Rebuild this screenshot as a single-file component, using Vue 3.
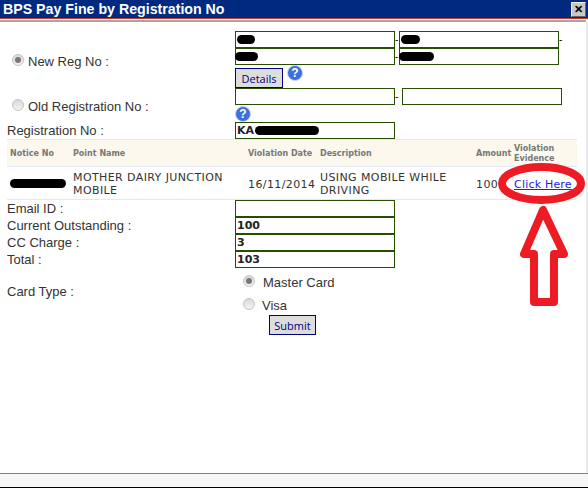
<template>
  <div class="dialog">
    <div class="titlebar">
      <span class="title">BPS Pay Fine by Registration No</span>
      <span class="close">✕</span>
    </div>
    <div class="rule"></div>

    <div class="body">
      <div class="row row-new">
        <label class="label radio-label">
          <input type="radio" name="regtype" class="radio" checked />
          New Reg No :
        </label>
        <div>
          <div class="pair">
            <div class="field"><span class="blot" style="width: 18px"></span></div>
            <span class="dash">-</span>
            <div class="field"><span class="blot" style="width: 19px"></span></div>
            <span class="dash">-</span>
          </div>
          <div class="pair">
            <div class="field"><span class="blot blot-out" style="width: 23px"></span></div>
            <span class="dash">-</span>
            <div class="field"><span class="blot blot-out" style="width: 35px"></span></div>
          </div>
          <div class="details-line">
            <button class="btn btn-details">Details</button>
            <span class="help help-up">?</span>
          </div>
        </div>
      </div>

      <div class="row row-old">
        <label class="label radio-label">
          <input type="radio" name="regtype" class="radio" />
          Old Registration No :
        </label>
        <div>
          <div class="pair">
            <div class="field"></div>
            <span class="dash dash-wide">-</span>
            <div class="field"></div>
          </div>
          <div class="help-line"><span class="help">?</span></div>
        </div>
      </div>

      <div class="row">
        <div class="label">Registration No :</div>
        <div class="field value">KA<span class="blot" style="width: 64px; margin-left: 1px"></span></div>
      </div>

      <table class="violations">
        <thead>
          <tr>
            <th class="c1">Notice No</th>
            <th class="c2">Point Name</th>
            <th class="c3">Violation Date</th>
            <th class="c4">Description</th>
            <th class="c5">Amount</th>
            <th class="c6">Violation Evidence</th>
          </tr>
        </thead>
        <tbody>
          <tr>
            <td><span class="blot" style="width: 56px"></span></td>
            <td>MOTHER DAIRY JUNCTION MOBILE</td>
            <td>16/11/2014</td>
            <td>USING MOBILE WHILE DRIVING</td>
            <td>100</td>
            <td><a href="#" class="link" @click.prevent>Click Here</a></td>
          </tr>
        </tbody>
      </table>

      <div class="row" v-for="item in summary" :key="item.label">
        <div class="label">{{ item.label }}</div>
        <div class="field value">{{ item.value }}</div>
      </div>

      <div class="row row-card">
        <div class="label">Card Type :</div>
        <div class="card-options">
          <label class="card-option">
            <input type="radio" name="card" class="radio" checked />
            Master Card
          </label>
          <label class="card-option card-visa">
            <input type="radio" name="card" class="radio" />
            Visa
          </label>
          <button class="btn btn-submit">Submit</button>
        </div>
      </div>
    </div>

    <div class="footer"></div>

    <!-- red annotation drawn over the page -->
    <svg class="markup" width="588" height="488" viewBox="0 0 588 488">
      <ellipse cx="541.5" cy="183.5" rx="39.5" ry="16.5" fill="none" stroke="#ed1c24" stroke-width="8" />
      <path
        d="M543 210 L524 254 H534 V302 H554 V254 H564 Z"
        fill="none"
        stroke="#ed1c24"
        stroke-width="8"
        stroke-linejoin="round"
      />
    </svg>
  </div>
</template>

<script setup>
const summary = [
  { label: 'Email ID :', value: '' },
  { label: 'Current Outstanding :', value: '100' },
  { label: 'CC Charge :', value: '3' },
  { label: 'Total :', value: '103' }
]
</script>

<style>
html,
body {
  margin: 0;
  background: #fff;
  overflow: hidden;
}
</style>

<style scoped>
.dialog {
  position: relative;
  display: flex;
  flex-direction: column;
  width: 588px;
  height: 488px;
  background: #fff;
  font-family: "Liberation Sans", Arial, sans-serif;
  font-size: 13px;
  color: #333;
  overflow: hidden;
}

.titlebar {
  display: flex;
  align-items: center;
  justify-content: space-between;
  height: 18px;
  padding: 0 2px 0 3px;
  background: #002a7f;
  border-bottom: 1px solid #c0392b;
  flex: none;
}

.title {
  color: #fff;
  font-size: 14.2px;
  font-weight: bold;
  line-height: 18px;
}

.close {
  display: flex;
  align-items: center;
  justify-content: center;
  width: 13px;
  height: 13px;
  background: #c8c8c8;
  border: 1px solid;
  border-color: #eee #666 #666 #eee;
  color: #000;
  font-size: 11px;
  font-weight: bold;
  line-height: 1;
}

.rule {
  flex: none;
  height: 2px;
  margin: 1px 2px 0 0;
  background: #a6a6a6;
}

.body {
  flex: 1;
  padding: 9px 0 0 7px;
  border-right: 2px solid #ececec;
}

.row {
  display: grid;
  grid-template-columns: 228px 1fr;
  align-items: center;
}

.label {
  line-height: 17px;
}

.radio-label {
  display: flex;
  align-items: center;
  gap: 4px;
  padding-left: 5px;
}

.row-new .radio-label {
  padding-top: 3px;
}

.row-old .radio-label {
  padding-top: 2px;
}

.radio {
  appearance: none;
  position: relative;
  flex: none;
  width: 12px;
  height: 12px;
  margin: -3px 0 0;
  border: 1px solid #c4c4c4;
  border-radius: 50%;
  background: linear-gradient(#d8d8d8, #f4f4f4);
  box-sizing: border-box;
}

.radio:checked::after {
  content: "";
  position: absolute;
  top: 2px;
  left: 2px;
  width: 6px;
  height: 6px;
  border-radius: 50%;
  background: #777;
}

.pair {
  display: flex;
  align-items: center;
}

.field {
  width: 160px;
  height: 17px;
  box-sizing: border-box;
  flex: none;
  display: flex;
  align-items: center;
  padding-left: 1px;
  border: 1px solid #264d00;
  background: #fff;
}

.value {
  font-family: "DejaVu Sans", Verdana, sans-serif;
  font-size: 11px;
  font-weight: bold;
  color: #222;
}

.dash {
  width: 4px;
  font-size: 10px;
  color: #000;
  line-height: 1;
}

.dash-wide {
  width: 7px;
}

.blot {
  display: inline-block;
  flex: none;
  height: 9px;
  background: #000;
  border-radius: 5px;
}

.blot-out {
  margin-left: -2px;
}

.details-line {
  display: flex;
  align-items: flex-start;
  gap: 4px;
  height: 23px;
  padding-top: 3px;
  box-sizing: border-box;
}

.btn {
  padding: 0;
  box-sizing: border-box;
  background: #ddd;
  border: 1px solid #000080;
  color: #000080;
  font-family: "Open Sans", Tahoma, sans-serif;
  font-size: 11px;
  line-height: 1;
}

.btn-details {
  width: 48px;
  height: 20px;
}

.btn-submit {
  display: block;
  width: 47px;
  height: 20px;
  margin-left: 34px;
}

.help {
  display: flex;
  align-items: center;
  justify-content: center;
  width: 14px;
  height: 14px;
  border: 1px solid #c5d3f0;
  border-radius: 50%;
  background: #3f6fdc;
  color: #fff;
  font-size: 12px;
  font-weight: bold;
  line-height: 1;
}

.help-up {
  margin-top: -3px;
}

.help-line {
  height: 17px;
  padding-top: 1px;
  box-sizing: border-box;
}

.violations {
  width: 570px;
  table-layout: fixed;
  border-collapse: collapse;
  font-family: "DejaVu Sans", Verdana, sans-serif;
}

.violations th {
  height: 24px;
  padding: 2px 0 0 3px;
  background: #fdf8ee;
  border-top: 1px solid #e6e6fa;
  border-bottom: 1px solid #e6e6fa;
  color: #777;
  font-size: 8px;
  font-weight: bold;
  line-height: 10px;
  text-align: left;
}

.violations td {
  height: 30px;
  padding: 2px 0 0 3px;
  border-bottom: 1px solid #e6e6fa;
  color: #333;
  font-size: 11px;
  letter-spacing: 0.4px;
  line-height: 13px;
  vertical-align: middle;
}

.c1 { width: 60px; }
.c2 { width: 172px; }
.c3 { width: 69px; }
.c4 { width: 153px; }
.c5 { width: 35px; }

.link {
  color: #2222e0;
  letter-spacing: 0.2px;
  white-space: nowrap;
}

.row-card {
  align-items: start;
  height: 69px;
}

.row-card .label {
  margin-top: 15px;
}

.card-options {
  padding-top: 6px;
}

.card-option {
  display: flex;
  align-items: center;
  gap: 8px;
  height: 16px;
  padding-left: 8px;
}

.card-visa {
  gap: 7px;
  margin-top: 7px;
  margin-bottom: 2px;
}

.footer {
  flex: none;
  height: 13px;
  background: #f7f7f7;
  border-top: 1px solid #808080;
  border-bottom: 1px solid #000;
}

.markup {
  position: absolute;
  top: 0;
  left: 0;
  pointer-events: none;
}
</style>
